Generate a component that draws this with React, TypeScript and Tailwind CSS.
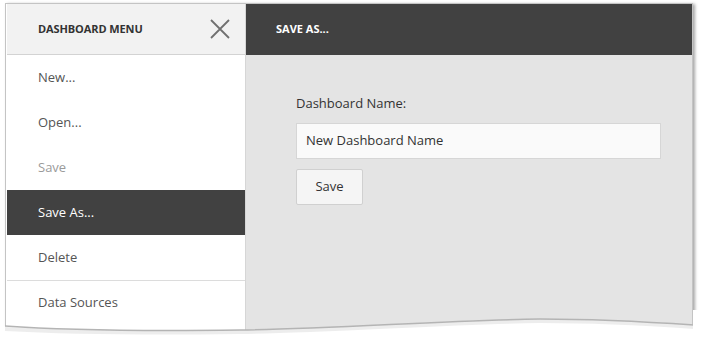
import React from "react";

const items = [
  { label: "New...", state: "normal" },
  { label: "Open...", state: "normal" },
  { label: "Save", state: "disabled" },
  { label: "Save As...", state: "selected" },
  { label: "Delete", state: "normal" },
  { label: "Data Sources", state: "separated" },
];

export default function App() {
  return (
    <div
      className="relative w-[701px] h-[343px] bg-white overflow-hidden"
      style={{ fontFamily: '"Open Sans", "Noto Sans", sans-serif' }}
    >
      <div className="ml-[5px] mt-[3px] w-[688px] h-[336px] border border-[#c4c4c4] shadow-[2px_1px_3px_rgba(0,0,0,0.35)] flex bg-[#e4e4e4]">
        <div className="w-[240px] h-full bg-white border-r border-[#d6d6d6] flex flex-col">
          <div className="h-[51px] bg-[#f2f2f2] border-b border-[#d3d3d3] flex items-center justify-between pl-[31px] pr-[14px] ml-[1px]">
            <span className="text-[11px] font-bold text-[#333] tracking-[-0.1px]">DASHBOARD MENU</span>
            <svg width="22" height="22" viewBox="0 0 22 22">
              <path d="M2 2 L20 20 M20 2 L2 20" stroke="#707070" strokeWidth="1.8" />
            </svg>
          </div>
          {items.map((it) => (
            <div
              key={it.label}
              className={
                it.state === "selected"
                  ? "h-[45px] flex items-center pl-[31px] ml-[1px] bg-[#414141] text-white text-[13px]"
                  : it.state === "separated"
                  ? "h-[45px] flex items-center pl-[31px] ml-[1px] border-t border-[#dcdcdc] text-[#555] text-[13px]"
                  : it.state === "disabled"
                  ? "h-[45px] flex items-center pl-[31px] ml-[1px] text-[#9a9a9a] text-[13px]"
                  : "h-[45px] flex items-center pl-[31px] ml-[1px] text-[#555] text-[13px]"
              }
            >
              {it.label}
            </div>
          ))}
        </div>
        <div className="flex-1 flex flex-col">
          <div className="h-[51px] bg-[#414141] flex items-center pl-[30px]">
            <span className="text-[11px] font-bold text-white">SAVE AS...</span>
          </div>
          <div className="flex flex-col pl-[50px] pr-[31px] pt-[39px]">
            <div className="text-[13px] text-[#333] leading-[18px]">Dashboard Name:</div>
            <div className="mt-[11px] h-[36px] bg-[#fafafa] border border-[#d6d6d6] flex items-center pl-[9px] text-[13px] text-[#333]">
              New Dashboard Name
            </div>
            <div className="mt-[10px] w-[67px] h-[36px] bg-[#f5f5f5] border border-[#d0d0d0] rounded-[2px] flex items-center justify-center text-[13px] text-[#333]">
              Save
            </div>
          </div>
        </div>
      </div>
      <svg
        className="absolute left-0 top-[310px]"
        width="701"
        height="33"
        viewBox="0 310 701 33"
      >
        <path
          d="M0 326 C 60 330, 160 331, 240 330 C 330 329, 450 320, 540 319 C 600 319, 650 322, 701 325 L701 343 L0 343 Z"
          fill="#ffffff"
        />
        <path
          d="M5 329 C 60 332, 160 333, 240 332 C 330 331, 450 322, 540 321 C 600 321, 650 324, 694 327"
          fill="none"
          stroke="rgba(0,0,0,0.07)"
          strokeWidth="4"
        />
        <path
          d="M5 326 C 60 330, 160 331, 240 330 C 330 329, 450 320, 540 319 C 600 319, 650 322, 694 325"
          fill="none"
          stroke="#b4b4b4"
          strokeWidth="1.5"
        />
        <rect x="693" y="310" width="8" height="33" fill="#ffffff" />
      </svg>
    </div>
  );
}
